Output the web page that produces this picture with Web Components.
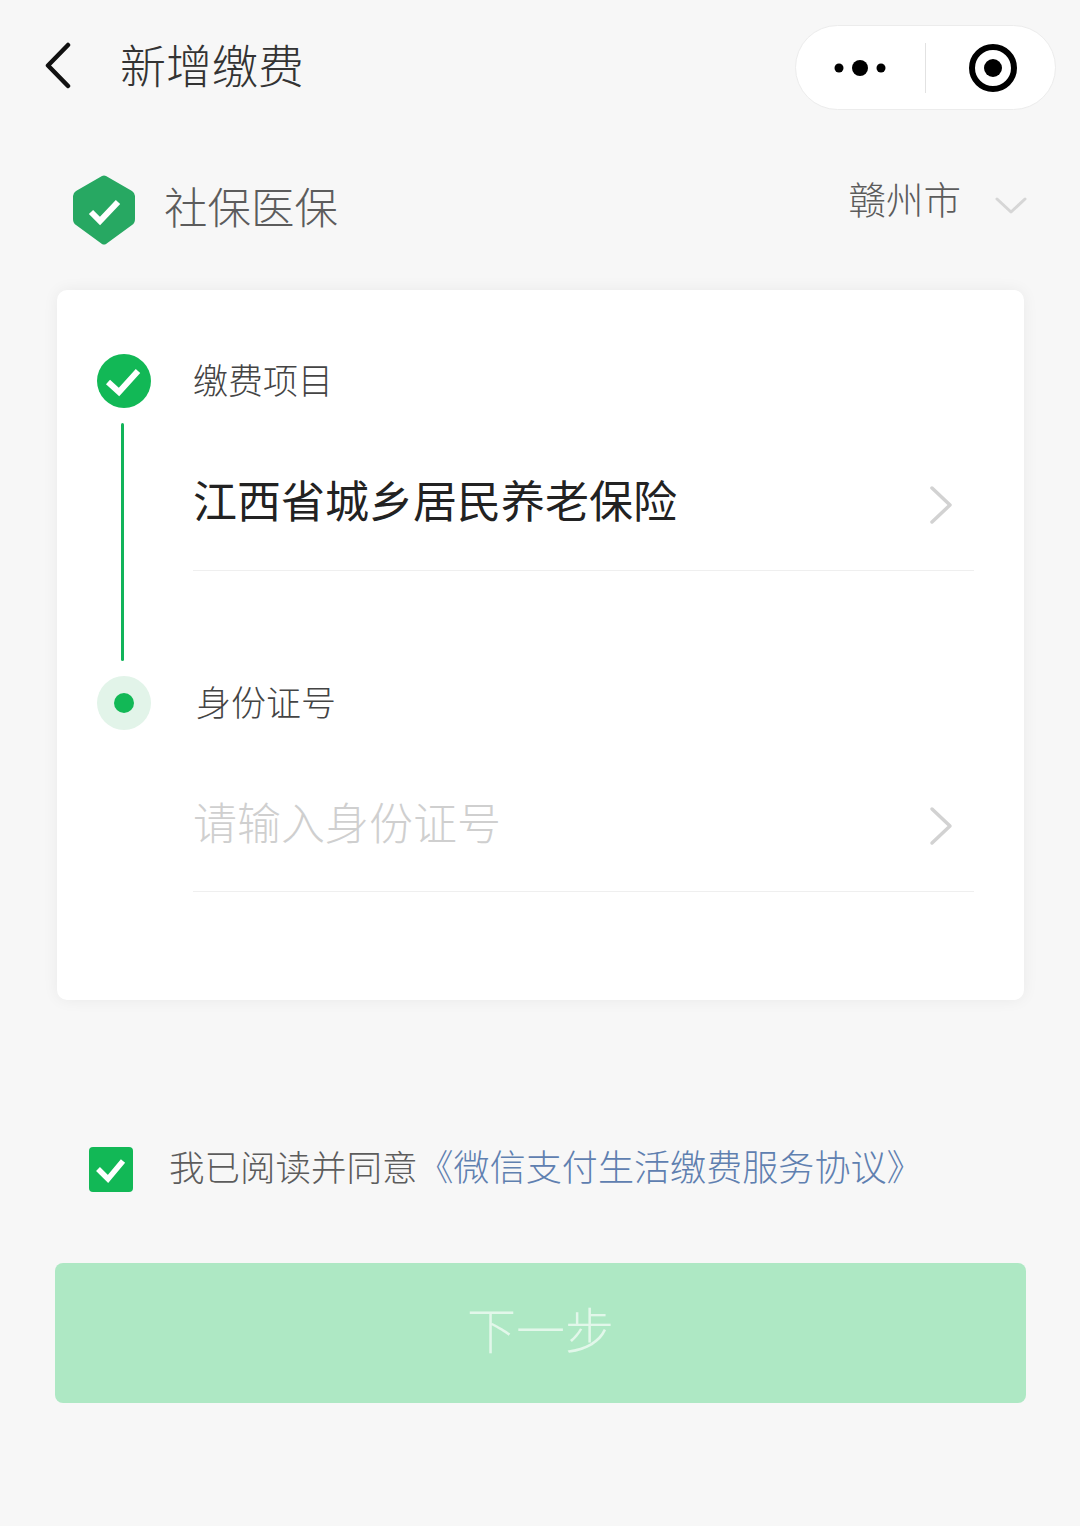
<!DOCTYPE html>
<html lang="zh-CN">
<head>
<meta charset="utf-8">
<title>新增缴费</title>
<style>
  html, body { margin: 0; background: #f7f7f7; }
  body { font-family: "Noto Sans CJK SC", "Noto Sans", sans-serif; font-weight: 200; }
</style>
</head>
<body>
<pay-page>
  <app-nav>新增缴费</app-nav>
  <brand-row city="赣州市">社保医保</brand-row>
  <step-card>
    <pay-step state="done" label="缴费项目" value="江西省城乡居民养老保险"></pay-step>
    <pay-step state="active" label="身份证号" placeholder="请输入身份证号"></pay-step>
  </step-card>
  <agree-row link="《微信支付生活缴费服务协议》">我已阅读并同意</agree-row>
  <next-button>下一步</next-button>
</pay-page>

<script>
class payPage extends HTMLElement {
    constructor() {
        super()
        this.attachShadow({ mode: 'open' })
        this.shadowRoot.innerHTML = `
          <style>
            :host { display: block; width: 1080px; height: 1526px; background: #f7f7f7; overflow: hidden; }
          </style>
          <slot></slot>
        `
    }
}

class appNav extends HTMLElement {
    constructor() {
        super()
        this.attachShadow({ mode: 'open' })
        this.shadowRoot.innerHTML = `
          <style>
            :host { display: flex; align-items: center; height: 85px; padding: 25px 24px 0 44px; }
            .back { width: 28px; height: 48px; flex: none; margin-top: -3px; }
            .title { margin-left: 48px; margin-top: -10px; font-size: 46px; line-height: 60px; color: #333; }
            .capsule { margin-left: auto; box-sizing: border-box; width: 261px; height: 85px; display: flex; align-items: center;
              background: #fff; border: 1px solid #ececec; border-radius: 43px; }
            .dots { width: 129px; height: 20px; flex: none; }
            .sep { width: 1px; height: 50px; background: #e2e2e2; flex: none; }
            .target { width: 54px; height: 54px; margin-left: 40px; flex: none; }
          </style>
          <svg class="back" viewBox="0 0 28 48" fill="none" stroke="#111" stroke-width="4.500" stroke-linecap="round" stroke-linejoin="round">
            <path d="M24 3 4 23.500 24 44"/>
          </svg>
          <span class="title"><slot></slot></span>
          <div class="capsule">
            <svg class="dots" viewBox="0 0 129 20" fill="#000">
              <circle cx="43" cy="10" r="4.500"/><circle cx="64" cy="10" r="8"/><circle cx="85" cy="10" r="4.500"/>
            </svg>
            <span class="sep"></span>
            <svg class="target" viewBox="0 0 54 54">
              <circle cx="27" cy="27" r="21" fill="none" stroke="#000" stroke-width="6"/>
              <circle cx="27" cy="27" r="9" fill="#000"/>
            </svg>
          </div>
        `
    }
}

class brandRow extends HTMLElement {
    constructor() {
        super()
        this.attachShadow({ mode: 'open' })
    }
    connectedCallback() {
        this.shadowRoot.innerHTML = `
          <style>
            :host { display: flex; align-items: flex-start; height: 70px; padding: 65px 53px 0 73px; }
            .shield { width: 62px; height: 70px; flex: none; }
            .name { margin-left: 29px; margin-top: -2px; font-size: 43.500px; line-height: 66px; color: #5c5c5c; }
            .city { margin-left: auto; margin-top: -2px; font-size: 37.500px; line-height: 50px; color: #5c5c5c; }
            .down { width: 32px; height: 18px; margin: 22px 0 0 34px; flex: none; }
          </style>
          <svg class="shield" viewBox="0 0 62 70">
            <path fill="#27a862" d="M33 1 59 16q3 2 3 5V44q0 4-3 6L33 69q-2 1-4 0L3 50q-3-2-3-6V21q0-3 3-5L29 1q2-1 4 0z"/>
            <path fill="none" stroke="#fff" stroke-width="6" d="M18 37 27 46 45 27"/>
          </svg>
          <span class="name"><slot></slot></span>
          <span class="city">${this.getAttribute('city')}</span>
          <svg class="down" viewBox="0 0 32 18" fill="none" stroke="#d6d6d6" stroke-width="3" stroke-linecap="round" stroke-linejoin="round">
            <path d="M2 2 16 15 30 2"/>
          </svg>
        `
    }
}

class stepCard extends HTMLElement {
    constructor() {
        super()
        this.attachShadow({ mode: 'open' })
        this.shadowRoot.innerHTML = `
          <style>
            :host { display: block; box-sizing: border-box; width: 967px; height: 710px; margin: 45px 0 0 57px; padding: 64px 50px 0 40px;
              background: #fff; border-radius: 10px; box-shadow: 0 0 16px rgba(0, 0, 0, .06); }
          </style>
          <slot></slot>
        `
    }
}

class payStep extends HTMLElement {
    constructor() {
        super()
        this.attachShadow({ mode: 'open' })
    }
    getIcon(state) {
        if (state === 'done') {
            return `<svg class="dot" viewBox="0 0 54 54">
              <circle cx="27" cy="27" r="27" fill="#12b856"/>
              <path fill="none" stroke="#fff" stroke-width="6" d="M11 28 22 38 41 17"/>
            </svg>`
        }
        return `<svg class="dot" viewBox="0 0 54 54">
              <circle cx="27" cy="27" r="27" fill="#e2f4e9"/>
              <circle cx="27" cy="27" r="10" fill="#12b856"/>
            </svg>`
    }
    connectedCallback() {
        const state = this.getAttribute('state')
        const value = this.getAttribute('value')
        const placeholder = this.getAttribute('placeholder')
        this.shadowRoot.innerHTML = `
          <style>
            :host { display: grid; grid-template-columns: 54px 1fr; column-gap: 42px; height: 322px; }
            .rail { display: flex; flex-direction: column; align-items: flex-start; }
            .dot { width: 54px; height: 54px; flex: none; }
            .line { width: 3px; height: 238px; margin: 15px 0 0 24px; background: #12b45a; border-radius: 2px; }
            .label { font-size: 35px; line-height: 50px; color: #444; height: 54px; }
            .active .label { padding-left: 3px; }
            .field { box-sizing: border-box; height: 163px; padding-top: 61px; display: flex; align-items: flex-start; border-bottom: 1px solid #efefef; }
            .active .field { height: 162px; }
            .value { font-size: 44px; line-height: 60px; color: #222; font-weight: 400; }
            .hint { font-size: 44px; line-height: 60px; color: #cfcfcf; }
            .go { width: 26px; height: 40px; margin: 16px 20px 0 auto; flex: none; }
            .active .go { margin-top: 15px; }
          </style>
          <div class="rail">
            ${this.getIcon(state)}
            ${state === 'done' ? '<span class="line"></span>' : ''}
          </div>
          <div class="${state}">
            <div class="label">${this.getAttribute('label')}</div>
            <div class="field">
              ${value ? `<span class="value">${value}</span>` : `<span class="hint">${placeholder}</span>`}
              <svg class="go" viewBox="0 0 26 40" fill="none" stroke="#d2d2d2" stroke-width="3.500" stroke-linecap="round" stroke-linejoin="round">
                <path d="M4 3 22 20 4 37"/>
              </svg>
            </div>
          </div>
        `
    }
}

class agreeRow extends HTMLElement {
    constructor() {
        super()
        this.attachShadow({ mode: 'open' })
    }
    connectedCallback() {
        this.shadowRoot.innerHTML = `
          <style>
            :host { display: flex; align-items: center; height: 45px; margin: 147px 0 0 89px; }
            .box { width: 44px; height: 45px; flex: none; }
            .text { margin-left: 36px; font-size: 35.500px; line-height: 45px; color: #5c5c5c; white-space: nowrap; margin-top: -8px; }
            .link { color: #5f80b0; font-size: 36.100px; }
          </style>
          <svg class="box" viewBox="0 0 44 45">
            <rect width="44" height="45" rx="4" fill="#12b856"/>
            <path fill="none" stroke="#fff" stroke-width="5.500" d="M9 22 19 32 34 14"/>
          </svg>
          <span class="text"><slot></slot><span class="link">${this.getAttribute('link')}</span></span>
        `
    }
}

class nextButton extends HTMLElement {
    constructor() {
        super()
        this.attachShadow({ mode: 'open' })
        this.shadowRoot.innerHTML = `
          <style>
            :host { display: flex; align-items: center; justify-content: center; width: 971px; height: 140px; margin: 71px 0 0 55px;
              background: #aee8c4; border-radius: 8px; color: #e2f7ea; font-size: 49px; }
            span { margin-top: -12px; }
          </style>
          <span><slot></slot></span>
        `
    }
}

customElements.define('pay-page', payPage)
customElements.define('app-nav', appNav)
customElements.define('brand-row', brandRow)
customElements.define('step-card', stepCard)
customElements.define('pay-step', payStep)
customElements.define('agree-row', agreeRow)
customElements.define('next-button', nextButton)
</script>
</body>
</html>
